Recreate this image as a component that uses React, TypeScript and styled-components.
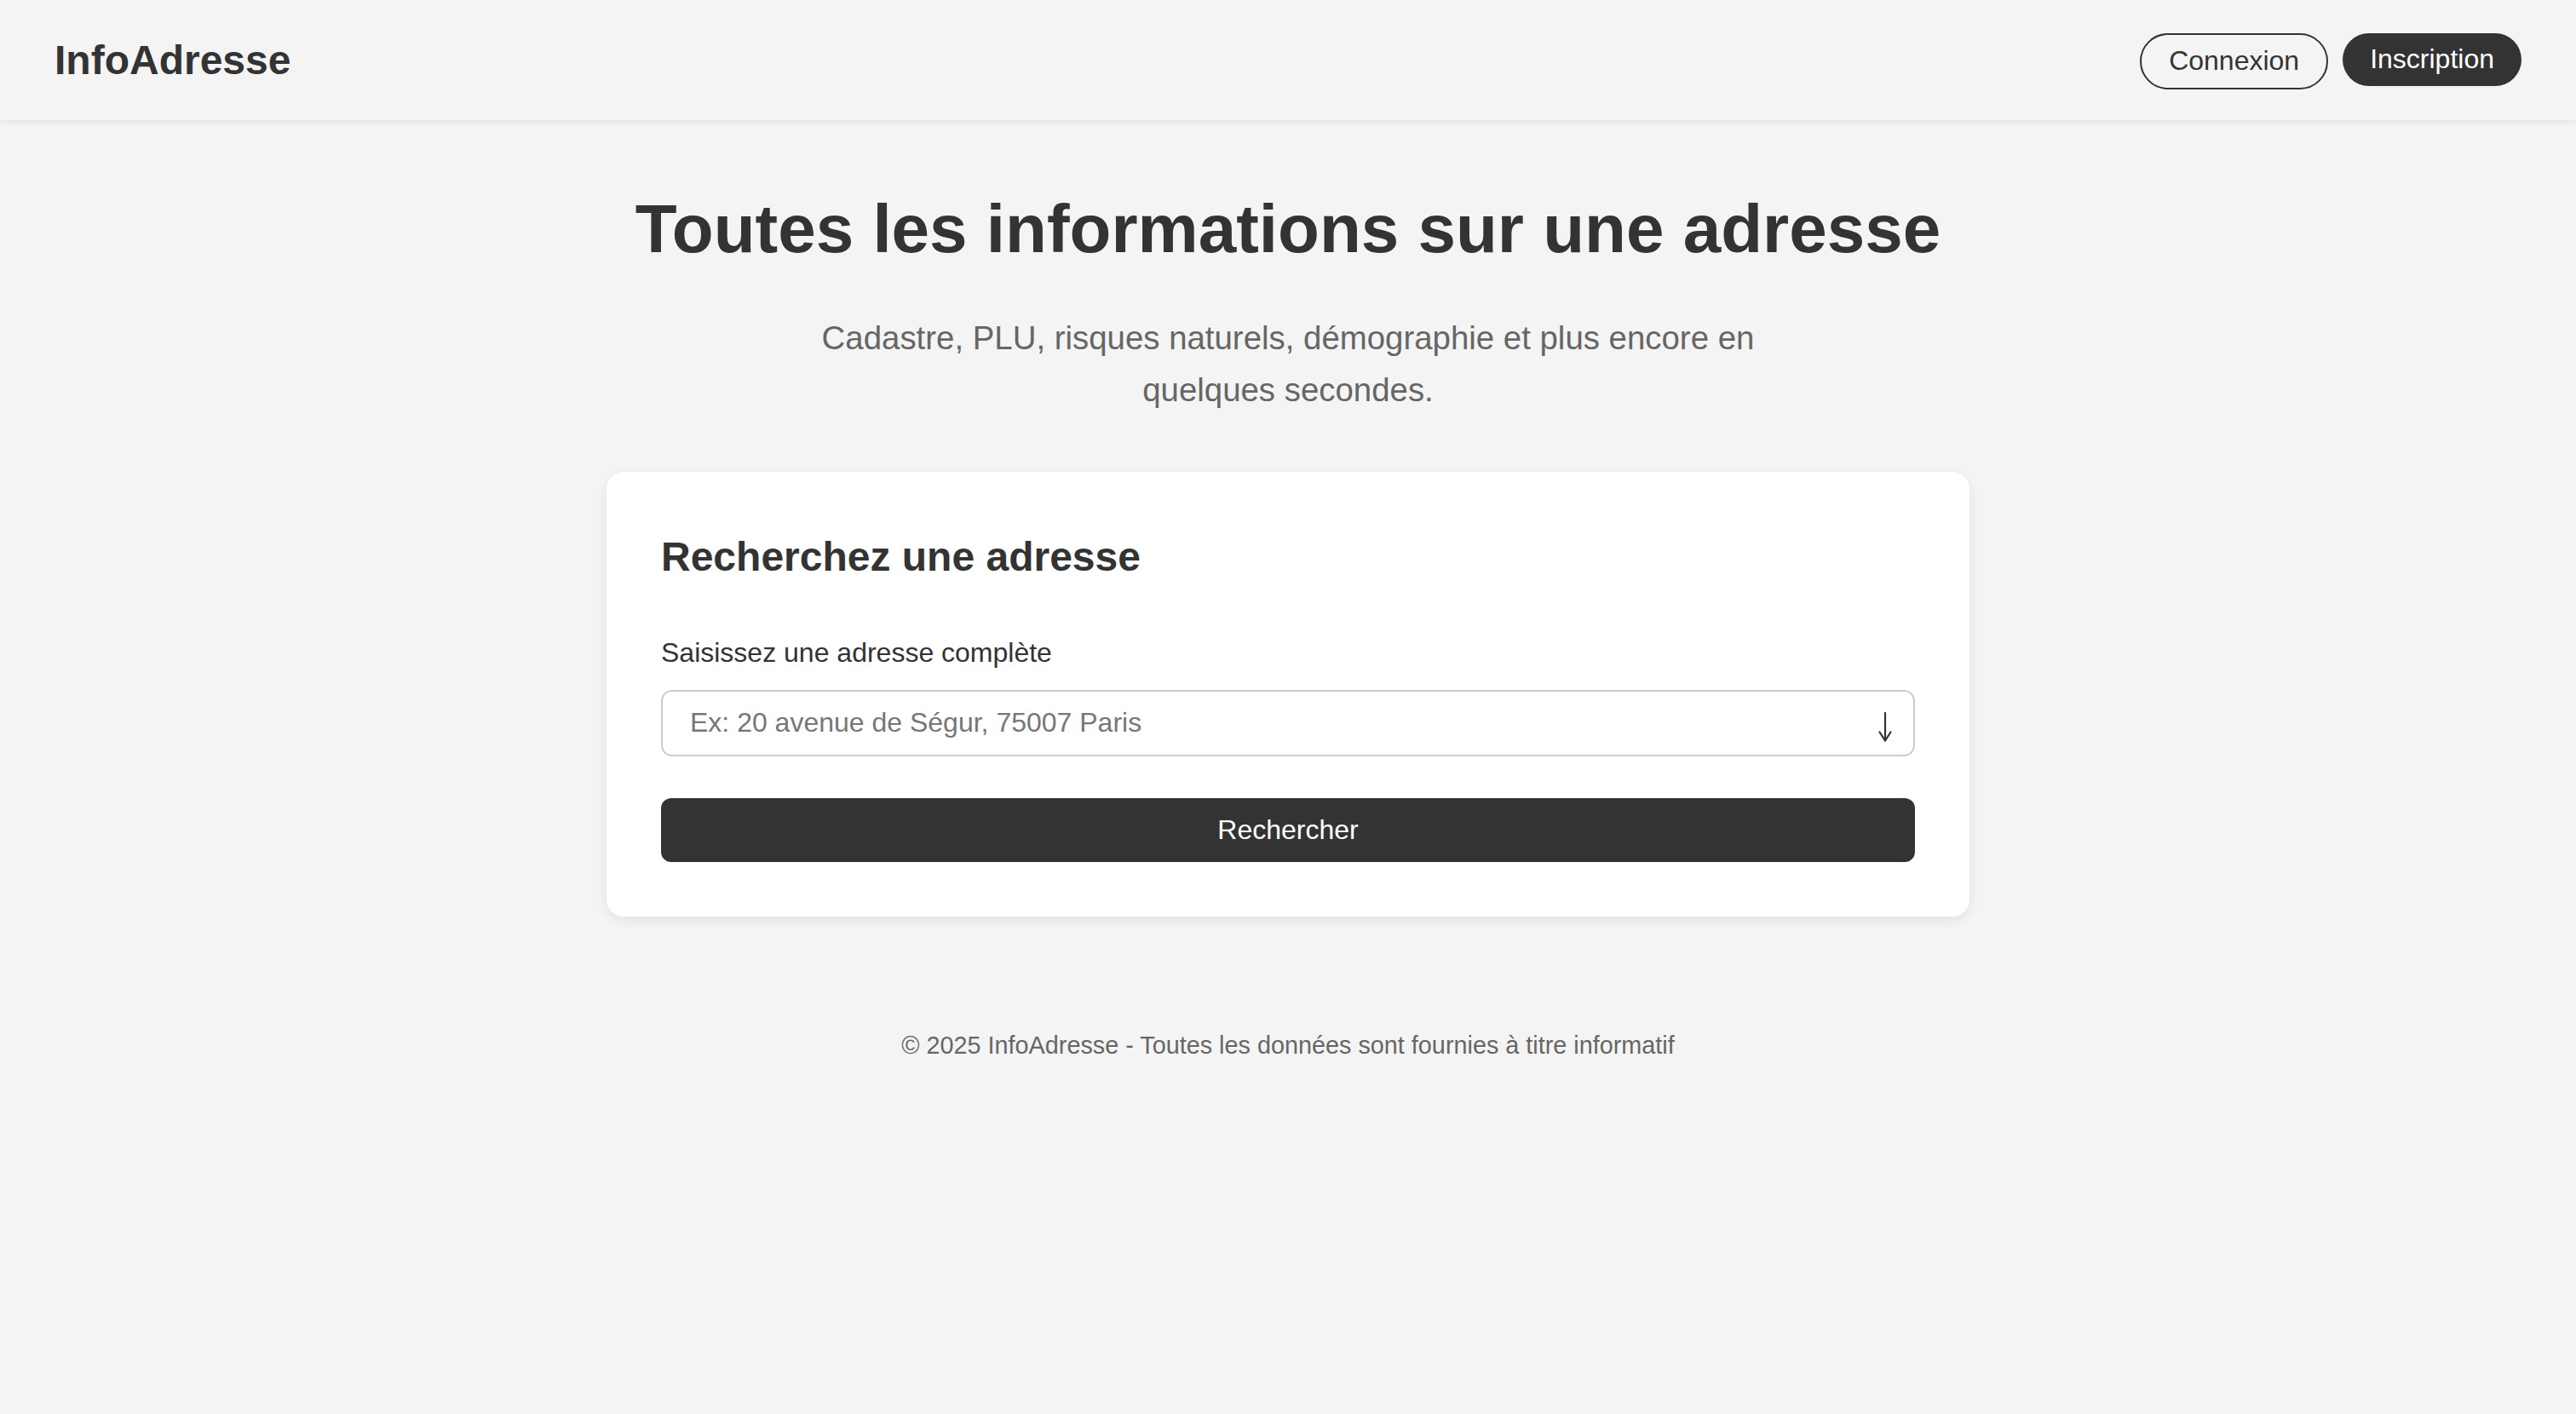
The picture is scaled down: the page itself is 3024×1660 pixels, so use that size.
import React from "react";
import styled, { createGlobalStyle } from "styled-components";

const GlobalStyle = createGlobalStyle`
  html, body {
    margin: 0;
    padding: 0;
    background: #f4f4f4;
  }
  body {
    font-family: "Liberation Sans", Arial, Helvetica, sans-serif;
    color: #333;
  }
  * { box-sizing: border-box; }
`;

const Page = styled.div`
  min-height: 1660px;
  background: #f4f4f4;
  display: flex;
  flex-direction: column;
`;

const Header = styled.header`
  height: 141px;
  display: flex;
  align-items: center;
  justify-content: space-between;
  padding: 0 64px;
  background: #f4f4f4;
  box-shadow: 0 2px 6px rgba(0, 0, 0, 0.08);
  position: relative;
  z-index: 1;
`;

const Logo = styled.div`
  font-size: 48px;
  font-weight: 700;
  color: #333;
  line-height: 1;
`;

const Nav = styled.nav`
  display: flex;
  align-items: flex-start;
  gap: 17px;
  margin-top: 2px;
`;

const NavButton = styled.button<{ $primary?: boolean }>`
  font-family: inherit;
  font-size: 32px;
  line-height: 37px;
  padding: 12.5px 32px;
  border-radius: 999px;
  border: ${(p) => (p.$primary ? "none" : "2px solid #333")};
  background: ${(p) => (p.$primary ? "#333" : "transparent")};
  color: ${(p) => (p.$primary ? "#fff" : "#333")};
  cursor: pointer;
`;

const Main = styled.main`
  display: flex;
  flex-direction: column;
  align-items: center;
  padding: 82px 0 0;
`;

const Title = styled.h1`
  margin: 0 0 51px;
  font-size: 80px;
  font-weight: 700;
  line-height: 92px;
  color: #333;
  text-align: center;
`;

const Subtitle = styled.p`
  margin: 0 0 65px;
  max-width: 1200px;
  font-size: 38.4px;
  line-height: 61.4px;
  color: #666;
  text-align: center;
`;

const Card = styled.section`
  width: 1600px;
  background: #fff;
  border-radius: 20px;
  padding: 72px 64px 64px;
  box-shadow: 0 4px 14px rgba(0, 0, 0, 0.08);
  display: flex;
  flex-direction: column;
`;

const CardTitle = styled.h2`
  margin: 0 0 67px;
  font-size: 48px;
  font-weight: 700;
  line-height: 55px;
  color: #333;
`;

const Label = styled.label`
  font-size: 32px;
  line-height: 37px;
  color: #333;
  margin-bottom: 25px;
`;

const InputWrap = styled.div`
  position: relative;
  margin-bottom: 49px;
`;

const Input = styled.input`
  width: 100%;
  height: 78px;
  padding: 0 80px 0 32px;
  font-family: inherit;
  font-size: 32px;
  color: #333;
  background: #fff;
  border: 2px solid #ccc;
  border-radius: 13px;
  outline: none;
  &::placeholder {
    color: #777;
  }
`;

const Arrow = styled.svg`
  position: absolute;
  right: 27px;
  top: 26px;
  width: 16px;
  height: 35px;
`;

const SubmitButton = styled.button`
  width: 100%;
  height: 75px;
  font-family: inherit;
  font-size: 32px;
  color: #fff;
  background: #333;
  border: none;
  border-radius: 12px;
  cursor: pointer;
`;

const Footer = styled.footer`
  margin-top: 135px;
  font-size: 28.8px;
  line-height: 33px;
  color: #666;
  text-align: center;
`;

export default function App() {
  return (
    <>
      <GlobalStyle />
      <Page>
        <Header>
          <Logo>InfoAdresse</Logo>
          <Nav>
            <NavButton>Connexion</NavButton>
            <NavButton $primary>Inscription</NavButton>
          </Nav>
        </Header>
        <Main>
          <Title>Toutes les informations sur une adresse</Title>
          <Subtitle>
            Cadastre, PLU, risques naturels, démographie et plus encore en quelques secondes.
          </Subtitle>
          <Card>
            <CardTitle>Recherchez une adresse</CardTitle>
            <Label htmlFor="address">Saisissez une adresse complète</Label>
            <InputWrap>
              <Input id="address" placeholder="Ex: 20 avenue de Ségur, 75007 Paris" />
              <Arrow viewBox="0 0 16 35" fill="none" stroke="#333" strokeWidth="2.2" strokeLinecap="round" strokeLinejoin="miter">
                <path d="M8 1 V33" />
                <path d="M1.5 23.5 L8 33.5 L14.5 23.5" />
              </Arrow>
            </InputWrap>
            <SubmitButton>Rechercher</SubmitButton>
          </Card>
          <Footer>© 2025 InfoAdresse - Toutes les données sont fournies à titre informatif</Footer>
        </Main>
      </Page>
    </>
  );
}
